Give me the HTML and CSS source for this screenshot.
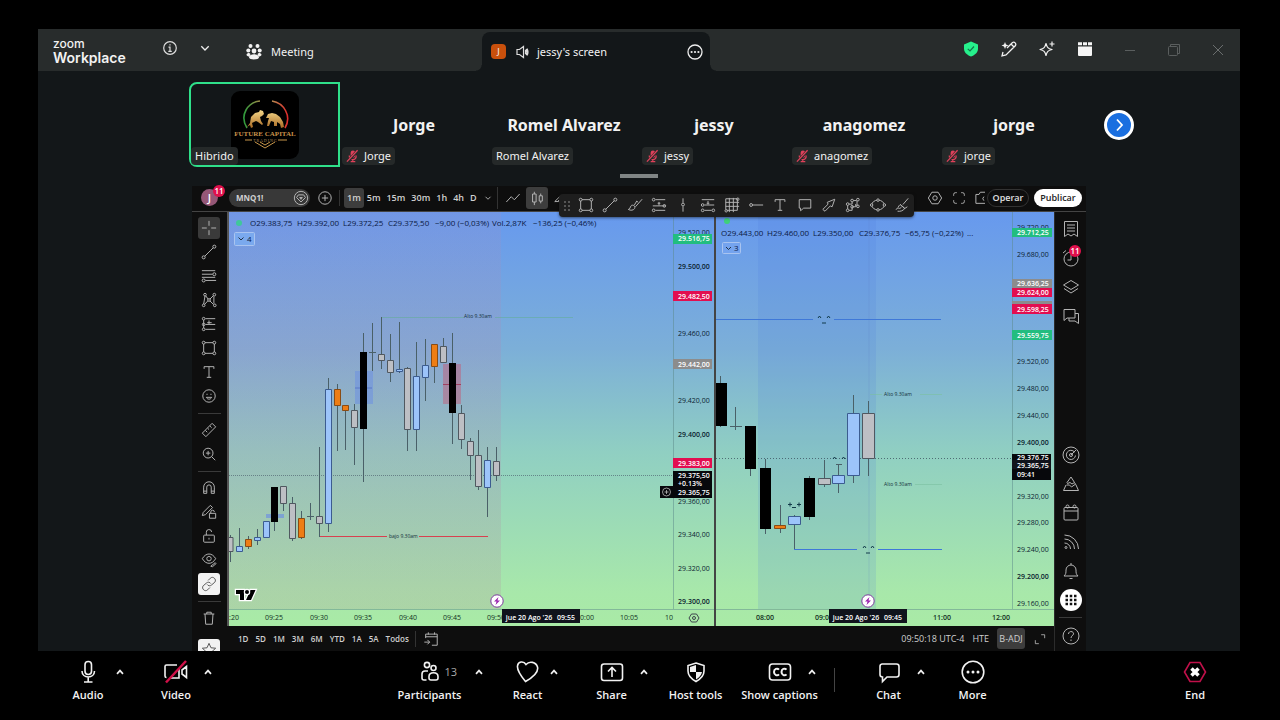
FILE: index.html
```html
<!DOCTYPE html>
<html lang="en">
<head>
<meta charset="utf-8">
<title>Zoom Workplace</title>
<link rel="stylesheet" href="styles.css">
</head>
<body>
<svg class="sprite" aria-hidden="true">
  <symbol id="mic-off" viewBox="0 0 14 14"><rect x="5" y="1" width="5" height="8" rx="2.5" fill="#e0405a"/><path d="M3.500 6.500c0 6 7.500 6 7.500 0M7.300 11v2M5 13h5" fill="none" stroke="#e0405a" stroke-width="1.300"/><path d="M1.500 13.500 12.500 1" stroke="#262a2a" stroke-width="3"/><path d="M1 13 12.500.8" stroke="#e0405a" stroke-width="1.400"/></symbol>
  <symbol id="caret" viewBox="0 0 12 12"><path d="M3 7.800 6 4.600l3 3.200" fill="none" stroke="#eee" stroke-width="1.700"/></symbol>
  <symbol id="i-cross" viewBox="0 0 18 18"><path d="M9 1v5.500M9 11.500V17M1 9h5.500M11.500 9H17"/></symbol>
  <symbol id="i-line" viewBox="0 0 18 18"><circle cx="3" cy="15" r="1.700"/><circle cx="15" cy="3" r="1.700"/><path d="M4.300 13.700 13.700 4.300"/></symbol>
  <symbol id="i-fib" viewBox="0 0 18 18"><path d="M1 3h15M1 7h12M1 10.500h15M5 14h12"/><circle cx="15" cy="7" r="1.700"/><circle cx="3" cy="14" r="1.700"/></symbol>
  <symbol id="i-pattern" viewBox="0 0 18 18"><path d="M3 13.500 4.500 4.500M5.500 4.500 8 8M10 8l4-4M10 10l4 4M7.700 10 4 14M14.500 5v8"/><circle cx="4.500" cy="3" r="1.500"/><circle cx="9" cy="9" r="1.500"/><circle cx="15" cy="3" r="1.500"/><circle cx="3" cy="15" r="1.500"/><circle cx="15.500" cy="15" r="1.500"/></symbol>
  <symbol id="i-forecast" viewBox="0 0 18 18"><path d="M5 3h11M5 9.500h11M5 15h11M3 4.500v9M9 5v4M7 7.500h5"/><circle cx="3" cy="3" r="1.500"/><circle cx="3" cy="9.500" r="1.500"/><circle cx="3" cy="15" r="1.500"/></symbol>
  <symbol id="i-long" viewBox="0 0 18 18"><path d="M5 3h11M5 15h11M2 10h14M9 5.500v4M7.500 7h3"/><circle cx="3" cy="3" r="1.500"/><circle cx="3" cy="15" r="1.500"/><circle cx="15" cy="10" r="1.500"/></symbol>
  <symbol id="i-short" viewBox="0 0 18 18"><path d="M2 3h14M5 9h11M5 15h8M9 4.500v4M7.500 7h3"/><circle cx="3" cy="9" r="1.500"/><circle cx="3" cy="15" r="1.500"/><circle cx="15" cy="15" r="1.500"/></symbol>
  <symbol id="i-rect" viewBox="0 0 18 18"><path d="M4.500 3h9M4.500 15h9M3 4.500v9M15 4.500v9"/><circle cx="3" cy="3" r="1.600"/><circle cx="15" cy="3" r="1.600"/><circle cx="3" cy="15" r="1.600"/><circle cx="15" cy="15" r="1.600"/></symbol>
  <symbol id="i-text" viewBox="0 0 18 18"><path d="M3.500 5.500V3h11v2.500M9 3v12M6.500 15h5"/></symbol>
  <symbol id="i-smile" viewBox="0 0 18 18"><circle cx="9" cy="9" r="7"/><path d="M6.800 6.500v1.300M11.200 6.500v1.300M6 10.500c1 2.700 5 2.700 6 0z"/></symbol>
  <symbol id="i-ruler" viewBox="0 0 18 18"><path d="M1.500 12.500 12.500 1.500l4 4-11 11zM5 9.500l2 2M7.500 7l1.500 1.500M10 4.500l2 2"/></symbol>
  <symbol id="i-zoom" viewBox="0 0 18 18"><circle cx="8" cy="8" r="5.500"/><path d="m12 12 4 4M8 5.500v5M5.500 8h5"/></symbol>
  <symbol id="i-magnet" viewBox="0 0 18 18"><path d="M3 15V8a6 6 0 0 1 12 0v7h-3.500V8a2.500 2.500 0 0 0-5 0v7zM3 12.500h3.500M11.500 12.500H15"/></symbol>
  <symbol id="i-penlock" viewBox="0 0 18 18"><path d="m1.500 13 1-3.500 8-8 2.500 2.500-8 8zM9.500 10.500h7v5.500h-7zM11 10.500V9a2 2 0 0 1 4 0"/></symbol>
  <symbol id="i-lock" viewBox="0 0 18 18"><rect x="3" y="8" width="12" height="8" rx="1"/><path d="M6 8V5a3 3 0 0 1 6-.5M9 11v2"/></symbol>
  <symbol id="i-eye" viewBox="0 0 18 18"><path d="M1.500 7.500c4-7 11-7 15 0-4 7-11 7-15 0z"/><circle cx="9" cy="7.500" r="2.500"/><path d="m11 16 5-4 1 1-4 3.500z"/></symbol>
  <symbol id="i-link" viewBox="0 0 18 18"><path d="m8 5 2.500-2.500c3-3 7.500 1.500 5 4.500L12 10c-1.500 1.500-4 1.300-5-.5M10 13l-2.500 2.500c-3 3-7.500-1.500-5-4.500L6 8c1.500-1.500 4-1.300 5 .5"/></symbol>
  <symbol id="i-trash" viewBox="0 0 18 18"><path d="M3 4.500h12M6.500 4.500V2.500h5v2M4.500 4.500l.8 11.500h7.400l.8-11.500"/></symbol>
  <symbol id="i-star" viewBox="0 0 18 18"><path d="m9 1.500 2.200 5 5.300.5-4 3.600 1.200 5.400L9 13.200 4.300 16l1.200-5.400-4-3.600 5.300-.5z"/></symbol>
  <symbol id="i-brush" viewBox="0 0 18 18"><path d="M1.500 14c2-.5 2-2.500 3-4 1.500-2 5.500 0 4 3-1 2-4.500 2.500-7 1zM8 9.500l3-5M9.500 11 17 2.500M11 4.500l1.500 1.500"/></symbol>
  <symbol id="i-vline" viewBox="0 0 18 18"><path d="M9 1.500v5M9 10.500v6"/><circle cx="9" cy="8.500" r="1.600"/></symbol>
  <symbol id="i-grid" viewBox="0 0 18 18"><path d="M2 2h13v13H3M2 2v12M6 1v16M10.500 1v16M2 6h15M2 10.500h15"/><circle cx="15.500" cy="2.500" r="1.400"/><circle cx="2.500" cy="15.500" r="1.400"/></symbol>
  <symbol id="i-hray" viewBox="0 0 18 18"><circle cx="3.500" cy="9" r="1.600"/><path d="M5 9h12"/></symbol>
  <symbol id="i-bubble" viewBox="0 0 18 18"><path d="M2.500 3h13v9.500H7.500L4 15.500v-3H2.500z"/></symbol>
  <symbol id="i-arrow" viewBox="0 0 18 18"><path d="m2 14 6-6-1-2 8.500-3.500L12.500 11l-2-1-6 6z"/></symbol>
  <symbol id="i-path" viewBox="0 0 18 18"><path d="M3 13.500v-4M4.500 8H8V5.500M4.500 15H8v-4h4V8M9.500 4H13M13.500 10.500V4.500"/><circle cx="3" cy="15" r="1.500"/><circle cx="3" cy="8" r="1.500"/><circle cx="8" cy="4" r="1.500"/><circle cx="8" cy="11" r="1.500"/><circle cx="14.500" cy="3" r="1.500"/><circle cx="14.500" cy="10.500" r="1.500"/></symbol>
  <symbol id="i-ellipse" viewBox="0 0 18 18"><ellipse cx="9" cy="9" rx="7" ry="5.500"/><g fill="#1e1e1e"><circle cx="1.800" cy="9" r="1.400"/><circle cx="16.200" cy="9" r="1.400"/><circle cx="9" cy="3.500" r="1.400"/><circle cx="9" cy="14.500" r="1.400"/></g></symbol>
  <symbol id="i-broom" viewBox="0 0 18 18"><path d="m16 1.500-6 7M2 14c3-.5 2.500-4 5-5.500l5 4c-1 3-5 4-8 3.500M7 8.500 12 13l3-2M5 13c2 0 3-1 3.500-2"/></symbol>
  <symbol id="i-hex" viewBox="0 0 18 18"><path d="m5.500 2.500-4 6.500 4 6.500h7l4-6.500-4-6.500z"/><circle cx="9" cy="9" r="2.500"/></symbol>
  <symbol id="i-full" viewBox="0 0 18 18"><path d="M3 6.500V5a2 2 0 0 1 2-2h1.500M11.500 3H13a2 2 0 0 1 2 2v1.500M15 11.500V13a2 2 0 0 1-2 2h-1.500M6.500 15H5a2 2 0 0 1-2-2v-1.500"/></symbol>
  <symbol id="i-plus" viewBox="0 0 18 18"><circle cx="9" cy="9" r="7"/><path d="M9 5.500v7M5.500 9h7"/></symbol>
  <symbol id="i-zig" viewBox="0 0 18 18"><path d="m1.500 13.500 5.500-6 3.500 3.500 6-6.500"/></symbol>
  <symbol id="i-candle" viewBox="0 0 18 18"><path d="M4 4.500h4v9H4zM6 2v2.500M6 13.500V17M11.500 6.500h3.500v6h-3.500zM13.200 4v2.500M13.200 12.500V15"/></symbol>
  <symbol id="i-down" viewBox="0 0 12 12"><path d="m3 4.500 3 3 3-3"/></symbol>
  <symbol id="i-list" viewBox="0 0 18 18"><path d="M2.500 1.500h13v15L12 14l-3 2-3-2-3.500 2.500zM5 5h8M5 8h8M5 11h8"/></symbol>
  <symbol id="i-alarm" viewBox="0 0 18 18"><circle cx="9" cy="10" r="7"/><path d="M9 5.500V11H5.500M1 4l3-2.500"/></symbol>
  <symbol id="i-layers" viewBox="0 0 18 18"><path d="m9 2.500 7.500 4.500L9 11.500 1.500 7zM2 10.500 9 15l7-4.500"/></symbol>
  <symbol id="i-chat2" viewBox="0 0 18 18"><path d="M2 2.500h11v8.500H5l-3 2.500zM13 6.500h3.500v10L13 14H7v-3"/></symbol>
  <symbol id="i-radar" viewBox="0 0 18 18"><circle cx="9" cy="9" r="8"/><path d="M12.500 6a4.600 4.600 0 1 0 1 3.500M9 9l5-5"/><circle cx="9" cy="9" r="1.500"/></symbol>
  <symbol id="i-idea" viewBox="0 0 18 18"><path d="m9 2 3.500 5.500L10 9 8 7.500l-2.500 1-.5-1zM4.500 10h3l2 2 3.500-2.500M4 10l-2.500 5.500h15L14 10l-1.500-2.500"/></symbol>
  <symbol id="i-cal" viewBox="0 0 18 18"><rect x="2" y="3.500" width="14" height="12.500" rx="1"/><path d="M2 7h14"/><circle cx="5.500" cy="2.500" r="1.500"/><circle cx="12.500" cy="2.500" r="1.500"/></symbol>
  <symbol id="i-rss" viewBox="0 0 18 18"><circle cx="4" cy="14.500" r="1"/><path d="M2.500 10a6 6 0 0 1 6 6M2.500 6a10 10 0 0 1 10 10M2.500 2a14 14 0 0 1 14 14"/></symbol>
  <symbol id="i-bell" viewBox="0 0 18 18"><path d="M2 14h14c-2-2-2-3-2-6a5 5 0 0 0-10 0c0 3 0 4-2 6zM7.500 16.500h3M9 1v2"/></symbol>
  <symbol id="i-help" viewBox="0 0 18 18"><circle cx="9" cy="9" r="8"/><path d="M6.500 7c0-3.500 5.500-3 5 0-.3 1.500-2.500 2-2.500 4M9 12.500V14"/></symbol>
  <symbol id="i-goto" viewBox="0 0 18 18"><path d="M3 8V3.500h13V16h-6M3 6.500h13M6 1.500V4M13 1.500V4M1.500 12.500h6M5 10l2.500 2.500L5 15"/></symbol>
  <symbol id="i-expand" viewBox="0 0 18 18"><path d="M10.500 3.500H15V8M7.500 15H3v-4.500"/></symbol>
  <symbol id="bolt" viewBox="0 0 14 14"><circle cx="7" cy="7" r="6.200" fill="#fff" stroke="#7b3a9c"/><path d="M8.500 3 4 7.500h2.500L5.500 11 10 6.500H7.500z" fill="#9c27b0"/></symbol>
</svg>

<main class="window">
  <header class="titlebar">
    <div class="title-left">
      <div class="brand"><span class="brand-zoom">zoom</span><span class="brand-work">Workplace</span></div>
      <button class="ic info" aria-label="Meeting information"><svg width="16" height="16" viewBox="0 0 16 16" fill="none" stroke="#ddd" stroke-width="1.200"><circle cx="8" cy="8" r="6.300"/><path d="M6.500 7.200H8v4M6.300 11.300h3.500M8 4.300v1.300"/></svg></button>
      <button class="ic drop" aria-label="More views"><svg width="12" height="12" viewBox="0 0 12 12"><path d="m2.300 4.300 3.700 3.700 3.700-3.700" fill="none" stroke="#eee" stroke-width="1.300"/></svg></button>
      <button class="meeting-tab"><svg width="16" height="18" viewBox="0 0 16 18" fill="#f2f2f2"><circle cx="4.500" cy="3" r="2"/><circle cx="11.500" cy="3" r="2"/><circle cx="2.300" cy="7.500" r="2"/><circle cx="13.700" cy="7.500" r="2"/><circle cx="8" cy="8" r="2.400"/><path d="M.5 11.500c1-2 3-2 4-.5l-1 2.500C2 13.500.5 13 .5 11.500zM15.500 11.500c-1-2-3-2-4-.5l1 2.500c1.500 0 3-.5 3-2zM3 14.500c0-4.500 10-4.500 10 0 0 2.500-10 2.500-10 0z"/></svg>Meeting</button>
    </div>
    <div class="screen-tab">
      <span class="initial">J</span>
      <svg width="14" height="14" viewBox="0 0 14 14" fill="none" stroke="#ddd" stroke-width="1.200"><path d="M1 4.500h2.500L7.500 1.500v11L3.500 9.500H1zM9.500 5v4M11 3.500q2 3.500 0 7M10 4q2 3 0 6"/></svg>
      <span class="tab-name">jessy's screen</span>
      <button class="ic" aria-label="Tab options"><svg width="18" height="18" viewBox="0 0 18 18"><circle cx="9" cy="9" r="7" fill="none" stroke="#eee" stroke-width="1.300"/><g fill="#eee"><circle cx="5.600" cy="9" r="1.100"/><circle cx="9" cy="9" r="1.100"/><circle cx="12.400" cy="9" r="1.100"/></g></svg></button>
    </div>
    <div class="title-right">
      <div class="tools">
        <button class="ic" aria-label="Security"><svg width="16" height="16" viewBox="0 0 16 16"><path d="M8 .5 15 3.500v4c0 4-3 6.500-7 8-4-1.500-7-4-7-8v-4z" fill="#26f08c"/><path d="m4.800 7.800 2.200 2.200 4-4.500" fill="none" stroke="#14754a" stroke-width="1.200"/></svg></button>
        <button class="ic" aria-label="AI pen"><svg width="16" height="16" viewBox="0 0 16 16" fill="none" stroke="#f2f2f2" stroke-width="1.300"><path d="m6 7 5.500-5.500c2-1 4 1 3 3L5 14l-4 .8L2 11M10 3l3 3"/><path d="m4 1 1 2.500 2.500 1L5 5.500 4 8 3 5.500.5 4.500 3 3.500z" fill="#f2f2f2" stroke="none"/></svg></button>
        <button class="ic" aria-label="AI Companion"><svg width="16" height="16" viewBox="0 0 16 16" fill="none" stroke="#f2f2f2" stroke-width="1.200" stroke-linejoin="round"><path d="M7 2.500c1 4 2 5 6 6-4 1-5 2-6 6-1-4-2-5-6-6 4-1 5-2 6-6zM13 .5v5M10.500 3h5"/></svg></button>
        <button class="ic" aria-label="Layout"><svg width="16" height="16" viewBox="0 0 16 16" fill="#f5f5f5"><path d="M1 1.300h4v3H1zM6 1.300h4v3H6zM11 1.300h4v3h-4zM1 5.500h14V14a1 1 0 0 1-1 1H2a1 1 0 0 1-1-1z"/></svg></button>
      </div>
      <div class="controls">
        <button class="ic" aria-label="Minimize"><svg width="12" height="12" viewBox="0 0 12 12"><path d="M1 6.500h10" stroke="#5a5e5e"/></svg></button>
        <button class="ic" aria-label="Restore"><svg width="12" height="12" viewBox="0 0 12 12" fill="none" stroke="#5a5e5e"><rect x=".5" y="2.500" width="9" height="9" rx="1"/><path d="M2.500 2.500v-2h9v9h-2"/></svg></button>
        <button class="ic" aria-label="Close"><svg width="12" height="12" viewBox="0 0 12 12"><path d="m1 1 10 10M11 1 1 11" stroke="#6a6e6e"/></svg></button>
      </div>
    </div>
  </header>

  <section class="strip">
    <ul class="tiles">
      <li class="tile active">
        <svg class="avatar-logo" viewBox="0 0 68 68">
          <defs><linearGradient id="ring" x2="1"><stop offset="0" stop-color="#2f9a3c"/><stop offset=".4" stop-color="#a98a4a"/><stop offset=".65" stop-color="#b98a50"/><stop offset="1" stop-color="#e02c2c"/></linearGradient><linearGradient id="gold" y2="1" x2="0"><stop offset="0" stop-color="#f6d98a"/><stop offset="1" stop-color="#a86a24"/></linearGradient></defs>
          <rect width="68" height="68" rx="9" fill="#000"/>
          <path d="M16 37C8 24 17 11 29 10M41 10c12 2 20 15 13 27" fill="none" stroke="url(#ring)" stroke-width="1.600"/>
          <path d="M16 36l3-4 1-6 4-4 4-1 1-2 3 1 1 3-2 2-2 1 1 4 2 3-1 1-4-3-2-1-4 2 1 4-2 1-1-3zM37 23l4-1 4 1 4 3 3 5 1 5-3 1-1-4-3-2 0 4-3 0 0-4-3-1-2 5-2 0 1-5 1-3-3 0z" fill="url(#gold)"/>
          <text x="34" y="45" text-anchor="middle" class="logo-name">FUTURE CAPITAL</text>
          <text x="34" y="51" text-anchor="middle" class="logo-sub">T R A D I N G</text>
          <path d="M14 49h7M47 49h9M24 51l10 6 10-6M29 51l5 3 5-3" fill="none" stroke="#c8964a" stroke-width="1"/>
        </svg>
        <span class="tag">Hibrido</span>
      </li>
      <li class="tile"><h2>Jorge</h2><span class="tag muted"><svg><use href="#mic-off"/></svg>Jorge</span></li>
      <li class="tile"><h2>Romel Alvarez</h2><span class="tag">Romel Alvarez</span></li>
      <li class="tile"><h2>jessy</h2><span class="tag muted"><svg><use href="#mic-off"/></svg>jessy</span></li>
      <li class="tile"><h2>anagomez</h2><span class="tag muted"><svg><use href="#mic-off"/></svg>anagomez</span></li>
      <li class="tile"><h2>jorge</h2><span class="tag muted"><svg><use href="#mic-off"/></svg>jorge</span></li>
    </ul>
    <button class="next" aria-label="Next participants"><svg width="14" height="14" viewBox="0 0 14 14"><path d="m5 1.500 5 5.500-5 5.500" fill="none" stroke="#fff" stroke-width="1.800"/></svg></button>
  </section>
  <div class="handle"></div>

  <section class="tv">
    <header class="tv-head">
      <div class="user">J<span class="badge">11</span></div>
      <button class="symbol">MNQ1!<svg class="line" viewBox="0 0 18 18"><circle cx="9" cy="9" r="7.500"/><path d="M6 5.500h6l2 3L9 13.500 4 8.500z"/><path d="M7.500 8.500h3L9 10.500z"/></svg></button>
      <button class="ic plus" aria-label="Compare"><svg class="line"><use href="#i-plus"/></svg></button>
      <nav class="frames">
        <button class="on">1m</button><button>5m</button><button>15m</button><button>30m</button><button>1h</button><button>4h</button><button>D</button>
        <button aria-label="Intervals"><svg class="line small"><use href="#i-down"/></svg></button>
      </nav>
      <div class="styles">
        <button class="ic" aria-label="Line"><svg class="line"><use href="#i-zig"/></svg></button>
        <button class="ic on" aria-label="Candles"><svg class="line"><use href="#i-candle"/></svg></button>
        <button class="ic" aria-label="Indicators"><svg class="line" viewBox="0 0 18 18"><path d="m2 13 7-7v7zM5 13l4-4" /></svg></button>
      </div>
      <div class="actions">
        <button class="ic" aria-label="Settings"><svg class="line"><use href="#i-hex"/></svg></button>
        <button class="ic" aria-label="Full screen"><svg class="line"><use href="#i-full"/></svg></button>
        <button class="ic cam" aria-label="Snapshot"><svg class="line" viewBox="0 0 18 18"><path d="M12 2.500H6L4.500 5H1v10h11M10 7.500a3 3 0 0 0 0 4.500"/></svg></button>
        <button class="trade">Operar</button>
        <button class="publish">Publicar</button>
      </div>
    </header>

    <aside class="side">
      <button class="on" aria-label="Cross"><svg class="line"><use href="#i-cross"/></svg></button>
      <button aria-label="Trend line"><svg class="line"><use href="#i-line"/></svg></button>
      <button aria-label="Fibonacci"><svg class="line"><use href="#i-fib"/></svg></button>
      <button aria-label="Patterns"><svg class="line"><use href="#i-pattern"/></svg></button>
      <button aria-label="Forecast"><svg class="line"><use href="#i-forecast"/></svg></button>
      <button aria-label="Shapes"><svg class="line"><use href="#i-rect"/></svg></button>
      <button aria-label="Text"><svg class="line"><use href="#i-text"/></svg></button>
      <button aria-label="Emoji"><svg class="line"><use href="#i-smile"/></svg></button>
      <hr>
      <button aria-label="Measure"><svg class="line"><use href="#i-ruler"/></svg></button>
      <button aria-label="Zoom in"><svg class="line"><use href="#i-zoom"/></svg></button>
      <hr>
      <button aria-label="Magnet"><svg class="line"><use href="#i-magnet"/></svg></button>
      <button aria-label="Stay in drawing mode"><svg class="line"><use href="#i-penlock"/></svg></button>
      <button aria-label="Lock"><svg class="line"><use href="#i-lock"/></svg></button>
      <button aria-label="Hide"><svg class="line"><use href="#i-eye"/></svg></button>
      <button class="lit" aria-label="Sync drawings"><svg class="line"><use href="#i-link"/></svg></button>
      <hr>
      <button aria-label="Remove"><svg class="line"><use href="#i-trash"/></svg></button>
      <hr class="blank">
      <button class="lit" aria-label="Favorites"><svg class="line"><use href="#i-star"/></svg></button>
    </aside>

    <div class="charts">
      <svg class="pane wide" viewBox="229 212 485 414">
        <defs>
          <linearGradient id="sky" x2="0" y2="1"><stop offset="0" stop-color="#6799ee"/><stop offset=".33" stop-color="#7cafd8"/><stop offset=".58" stop-color="#90cfc2"/><stop offset=".92" stop-color="#a8e8aa"/><stop offset="1" stop-color="#a9eaa6"/></linearGradient>
          <linearGradient id="haze" x2="0" y2="1"><stop offset="0" stop-color="#b48cb4" stop-opacity=".14"/><stop offset=".35" stop-color="#b482b4" stop-opacity=".22"/><stop offset="1" stop-color="#b48ca0" stop-opacity=".22"/></linearGradient>
        </defs>
        <rect x="229" y="212" width="485" height="414" fill="url(#sky)"/>
        <rect x="229" y="212" width="272" height="397" fill="url(#haze)"/>
        <path d="M673.500 212v397M229 609.500h485" stroke="#5c8a8a" stroke-opacity=".5"/>
        <path d="M229 475.500h444" stroke="#456" stroke-opacity=".6" stroke-dasharray="1 1"/>
        <circle cx="239" cy="223" r="3" fill="#3fc79a"/>
        <g class="ohlc"><text x="250" y="226">O29.383,75</text><text x="297" y="226">H29.392,00</text><text x="343" y="226">L29.372,25</text><text x="388" y="226">C29.375,50</text><text x="435" y="226">−9,00 (−0,03%)</text><text x="492" y="226">Vol.2,87K</text><text x="533" y="226">−136,25 (−0,46%)</text></g>
        <rect x="234.500" y="232.500" width="20" height="13" rx="1" fill="#7aa9ee" stroke="#a9c4f0"/><path d="m238.500 237.500 2.500 2.500 2.500-2.500" fill="none" stroke="#234"/><text x="247" y="242" class="ohlc">4</text>

        <rect x="355" y="371" width="18" height="33" fill="#6f92e0" fill-opacity=".6"/><rect x="443" y="364" width="18" height="40" fill="#c0607c" fill-opacity=".5"/>
        <path d="M355 388h17" stroke="#5a78c8"/><path d="M266 516h18" stroke="#6f92e0" stroke-width="4" stroke-opacity=".7"/><path d="M443 384.500h18" stroke="#a04060"/>
        <path d="M381 317.500h83M495 317.500h78" stroke="#5fae90" stroke-opacity=".5"/>
        <path d="M319 536.500h68M419 536.500h69" stroke="#d8404f"/>
        <text x="464" y="318" class="note">Alto 9.30am</text><text x="389" y="538" class="note">bajo 9.30am</text>

        <path class="wick" d="M230.500 535v27M239.500 528v24M248.500 536v13M257.500 529v16M274.500 487v44M283.500 486v25M292.500 497v44M301.500 511v28M310.500 503v17M319.500 447v90M328.500 378v154M337.500 384v67M345.500 405v45M354.500 404v61M363.500 333v149M372.500 323v48M381.500 317v52M390.500 334v48M399.500 322v51M407.500 367v84M416.500 342v109M425.500 339v62M434.500 344v39M443.500 338v25M452.500 333v111M461.500 405v44M470.500 438v42M478.500 430v60M487.500 447v70M496.500 447v34M307 516.500h7M369 352.500h7"/>
        <path class="gray" d="M228 537.500h5v14h-5zM280.500 486.500h6v17h-6zM289.500 503.500h6v35h-6zM316.500 516.500h6v7h-6zM351.500 410.500h6v17h-6zM378.500 354.500h6v6h-6zM387.500 360.500h6v12h-6zM404.500 368.500h6v61h-6zM440.500 346.500h6v16h-6zM458.500 413.500h6v26h-6zM467.500 441.500h6v14h-6zM475.500 455.500h6v31h-6zM493.500 461.500h6v14h-6z"/>
        <path class="blue" d="M236.500 546.500h6v5h-6zM254.500 537.500h6v3h-6zM263.500 521.500h6v16h-6zM325.500 389.500h6v134h-6zM396.500 369.500h6v2h-6zM413.500 376.500h6v53h-6zM422.500 365.500h6v12h-6zM484.500 460.500h6v27h-6z"/>
        <path class="orange" d="M245.500 539.500h6v7h-6zM298.500 518.500h6v19h-6zM334.500 389.500h6v16h-6zM342.500 405.500h6v5h-6zM431.500 344.500h6v22h-6z"/>
        <path d="M271 487h7v35h-7zM360 352h7v77h-7zM449 363h7v50h-7z"/>

        <g stroke="#fff" stroke-width="2.500" paint-order="stroke"><path d="M236 590h8v10h-4v-6h-4zM250.500 590h5l-4.500 10h-5z"/><circle cx="247" cy="592" r="2"/></g>
        <use href="#bolt" x="490" y="594" width="14" height="14"/>

        <g class="price"><text x="678" y="235">29.520,00</text><text x="678" y="336">29.460,00</text><text x="678" y="403">29.420,00</text><text x="678" y="504">29.360,00</text><text x="678" y="537">29.340,00</text><text x="678" y="571">29.320,00</text></g>
        <g class="price strong"><text x="678" y="269">29.500,00</text><text x="678" y="437">29.400,00</text><text x="678" y="604">29.300,00</text></g>
        <path d="M673 234h39v10h-39z" fill="#22bd7f"/><path d="M673 291h39v10h-39zM673 458h39v10h-39z" fill="#e20e50"/><path d="M673 359h39v10h-39z" fill="#8c8c8c"/><path d="M673 471h39v27h-39zM660 486h14v12h-14z" fill="#07080c"/>
        <g class="price white"><text x="678" y="241">29.516,75</text><text x="678" y="299">29.482,50</text><text x="678" y="367">29.442,00</text><text x="678" y="466">29.383,00</text><text x="678" y="478">29.375,50</text><text x="678" y="486">+0.13%</text><text x="678" y="495">29.365,75</text></g>
        <g fill="none" stroke="#bbb" stroke-width=".8"><circle cx="666.500" cy="492" r="4"/><path d="M664.500 492h4M666.500 490v4"/></g>

        <g class="time"><text x="234" y="620">:20</text><text x="274" y="620">09:25</text><text x="319" y="620">09:30</text><text x="363" y="620">09:35</text><text x="408" y="620">09:40</text><text x="452" y="620">09:45</text><text x="496" y="620">09:50</text><text x="585" y="620">10:00</text><text x="629" y="620">10:05</text><text x="669" y="620">10</text></g>
        <rect x="502" y="609" width="78" height="14" fill="#10131c"/><g class="time white"><text x="529" y="620">jue 20 Ago '26</text><text x="566" y="620">09:55</text></g>
        <g fill="none" stroke="#334" stroke-width=".9"><path d="m691.500 614-2.500 4 2.500 4h5l2.500-4-2.500-4z"/><circle cx="694" cy="618" r="1.500"/></g>
      </svg>

      <svg class="pane narrow" viewBox="716 212 338 414">
        <rect x="716" y="212" width="338" height="414" fill="url(#sky)"/>
        <rect x="758" y="212" width="118" height="397" fill="#4a78e0" fill-opacity=".15"/>
        <path d="M1012.500 212v397M716 609.500h338" stroke="#5c8a8a" stroke-opacity=".5"/>
        <path d="M869 212v397" stroke="#5878c0" stroke-opacity=".2"/>
        <path d="M716 458.500h296" stroke="#345" stroke-opacity=".7" stroke-dasharray="1 2"/>
        <circle cx="727" cy="221" r="3" fill="#3fd07a"/>
        <g class="ohlc"><text x="721" y="236">O29.443,00</text><text x="767" y="236">H29.460,00</text><text x="813" y="236">L29.350,00</text><text x="859" y="236">C29.376,75</text><text x="905" y="236">−65,75 (−0,22%)</text><text x="967" y="236">...</text></g>
        <rect x="722.500" y="242.500" width="18" height="11" rx="1" fill="#74a3ee" stroke="#a9c4f0"/><path d="m726 247 2.500 2.500 2.500-2.500" fill="none" stroke="#234"/><text x="734" y="251" class="ohlc">3</text>

        <path d="M716 319.500h97M834 319.500h107M794 549.500h63M878 549.500h64" stroke="#3f78d8"/>
        <path d="M870 394.500h12M920 394.500h22M915 484.500h27" stroke="#7cc0a0" stroke-opacity=".6"/>
        <text x="884" y="396" class="note">Alto 9.30am</text><text x="884" y="486" class="note">Alto 9.30am</text>
        <path d="m818 318 1.500-2 1.500 2M827 318l1.500-2 1.500 2M822 323h4M833 459l1.500-2 1.500 2M842 459l1.500-2 1.500 2M863 548l1.500-2 1.500 2M871 548l1.500-2 1.500 2M866 553h4M788 504.500h4M790 502.500v4M797 504.500h4M799 502.500v4M792 507.500h4" fill="none" stroke="#123a4a"/>

        <path class="wick" d="M720.500 376v51M735.500 407v23M750.500 426v50M765.500 459v75M780.500 505v28M794.500 515v34M809.500 476v44M824.500 460v27M838.500 464v29M853.500 395v88M868.500 401v75M730 426.500h12M836 464.500h6"/>
        <path class="gray" d="M818.500 478.500h12v6h-12zM862.500 413.500h12v45h-12z"/>
        <path class="blue" d="M788.500 516.500h12v8h-12zM832.500 475.500h12v8h-12zM847.500 413.500h12v62h-12z"/>
        <path class="orange" d="M774.500 525.500h11v3h-11z"/>
        <path d="M716 383h11v43h-11zM745 426h11v43h-11zM760 468h11v61h-11zM804 478h11v39h-11z"/>
        <use href="#bolt" x="861" y="594" width="14" height="14"/>

        <g class="price"><text x="1017" y="230">29.720,00</text><text x="1017" y="257">29.680,00</text><text x="1017" y="364">29.520,00</text><text x="1017" y="391">29.480,00</text><text x="1017" y="418">29.440,00</text><text x="1017" y="499">29.320,00</text><text x="1017" y="525">29.280,00</text><text x="1017" y="552">29.240,00</text><text x="1017" y="606">29.160,00</text></g>
        <g class="price strong"><text x="1017" y="445">29.400,00</text><text x="1017" y="579">29.200,00</text></g>
        <path d="M1012 228h40v9h-40zM1012 330h40v10h-40z" fill="#22bd7f"/><path d="M1012 279h40v9h-40zM1012 301h40v5h-40z" fill="#8c8c8c"/><path d="M1012 288h40v9h-40zM1012 304h40v10h-40z" fill="#e20e50"/><path d="M1012 454h39v26h-39z" fill="#07080c"/>
        <g class="price white"><text x="1017" y="235">29.712,25</text><text x="1017" y="286">29.636,25</text><text x="1017" y="295">29.624,00</text><text x="1017" y="312">29.598,25</text><text x="1017" y="338">29.559,75</text><text x="1017" y="460">29.376,75</text></g>
        <path d="M1012 460h39v9h-39z" fill="#10131c"/>
        <g class="price white"><text x="1017" y="468">29.365,75</text><text x="1017" y="477">09:41</text></g>

        <g class="time strong"><text x="765" y="620">08:00</text><text x="824" y="620">09:00</text><text x="942" y="620">11:00</text><text x="1001" y="620">12:00</text></g>
        <rect x="829" y="609" width="78" height="14" fill="#10131c"/><g class="time white"><text x="856" y="620">jue 20 Ago '26</text><text x="893" y="620">09:45</text></g>
      </svg>
    </div>

    <aside class="side-right">
      <button aria-label="Watchlist"><svg class="line"><use href="#i-list"/></svg></button>
      <button aria-label="Alerts"><svg class="line"><use href="#i-alarm"/></svg><span class="badge">11</span></button>
      <button aria-label="Object tree"><svg class="line"><use href="#i-layers"/></svg></button>
      <button aria-label="Chats"><svg class="line"><use href="#i-chat2"/></svg></button>
      <button class="first-low" aria-label="Screener"><svg class="line"><use href="#i-radar"/></svg></button>
      <button aria-label="Ideas"><svg class="line"><use href="#i-idea"/></svg></button>
      <button aria-label="Calendar"><svg class="line"><use href="#i-cal"/></svg></button>
      <button aria-label="News"><svg class="line"><use href="#i-rss"/></svg></button>
      <button aria-label="Notifications"><svg class="line"><use href="#i-bell"/></svg></button>
      <button aria-label="Products"><svg class="apps" width="22" height="22" viewBox="0 0 22 22"><circle cx="11" cy="11" r="11" fill="#fff"/><path d="M5.500 7h11M5.500 11h11M5.500 15h11" stroke="#111" stroke-width="2.500" stroke-dasharray="2.500 1.750"/></svg></button>
      <hr>
      <button aria-label="Help"><svg class="line"><use href="#i-help"/></svg></button>
    </aside>

    <footer class="tv-foot">
      <nav class="ranges"><button>1D</button><button>5D</button><button>1M</button><button>3M</button><button>6M</button><button>YTD</button><button>1A</button><button>5A</button><button>Todos</button></nav>
      <button class="ic goto" aria-label="Go to date"><svg class="line"><use href="#i-goto"/></svg></button>
      <div class="session"><button>09:50:18 UTC-4</button><button>HTE</button><button class="on">B-ADJ</button><button class="ic" aria-label="Maximize"><svg class="line"><use href="#i-expand"/></svg></button></div>
    </footer>

    <div class="floating">
      <span class="grip"></span>
      <button aria-label="Rectangle"><svg class="line"><use href="#i-rect"/></svg></button>
      <button aria-label="Trend line"><svg class="line"><use href="#i-line"/></svg></button>
      <button aria-label="Brush"><svg class="line"><use href="#i-brush"/></svg></button>
      <button aria-label="Long position"><svg class="line"><use href="#i-long"/></svg></button>
      <button aria-label="Vertical line"><svg class="line"><use href="#i-vline"/></svg></button>
      <button aria-label="Short position"><svg class="line"><use href="#i-short"/></svg></button>
      <button aria-label="Gann box"><svg class="line"><use href="#i-grid"/></svg></button>
      <button aria-label="Horizontal ray"><svg class="line"><use href="#i-hray"/></svg></button>
      <button aria-label="Text"><svg class="line"><use href="#i-text"/></svg></button>
      <button aria-label="Comment"><svg class="line"><use href="#i-bubble"/></svg></button>
      <button aria-label="Arrow"><svg class="line"><use href="#i-arrow"/></svg></button>
      <button aria-label="Path"><svg class="line"><use href="#i-path"/></svg></button>
      <button aria-label="Ellipse"><svg class="line"><use href="#i-ellipse"/></svg></button>
      <button aria-label="Highlighter"><svg class="line"><use href="#i-broom"/></svg></button>
    </div>
  </section>
</main>

<footer class="toolbar">
  <div class="group left">
    <div class="tool"><button class="main"><svg viewBox="0 0 24 24"><rect x="9" y="1.500" width="6.500" height="13" rx="3.200"/><path d="M6 11c0 8 12.500 8 12.500 0M12.200 17v4.500M8 22h8.500"/></svg>Audio</button><button class="caret" aria-label="Audio options"><svg><use href="#caret"/></svg></button></div>
    <div class="tool"><button class="main"><svg viewBox="0 0 24 24"><path d="M13 5H2.500A1.500 1.500 0 0 0 1 6.500V16a1.500 1.500 0 0 0 1.500 1.500M7 18h8V8M18 10l4.500-3.500v11L18 14z"/><path d="M2 22.500 22 1" stroke="#d01048" stroke-width="2.500"/></svg>Video</button><button class="caret" aria-label="Video options"><svg><use href="#caret"/></svg></button></div>
  </div>
  <div class="group center">
    <div class="tool people"><button class="main"><svg viewBox="0 0 24 24"><circle cx="9" cy="5" r="2.600"/><circle cx="15.500" cy="8" r="2.500"/><path d="M10 11H7a3 3 0 0 0-3 3v4a2 2 0 0 0 2 2h2.500M11 16.500c0-5 9-5 9 0V18a2 2 0 0 1-2 2h-5a2 2 0 0 1-2-2z"/></svg>Participants</button><span class="count">13</span><button class="caret" aria-label="Participant options"><svg><use href="#caret"/></svg></button></div>
    <div class="tool react"><button class="main"><svg viewBox="0 0 24 24"><path d="M9.500 21.500C5 16 1 10 1.500 6c.5-4.500 6-5.500 8.500-1.500C13.500.5 20 2 21.500 7c1.500 6-5 10.500-12 14.500z"/></svg>React</button><button class="caret" aria-label="Reaction options"><svg><use href="#caret"/></svg></button></div>
    <div class="tool"><button class="main"><svg viewBox="0 0 24 24"><rect x="1.500" y="4" width="21" height="16.500" rx="2.500"/><path d="M12 17V8.500M8 11.500l4-4 4 4"/></svg>Share</button><button class="caret" aria-label="Share options"><svg><use href="#caret"/></svg></button></div>
    <div class="tool"><button class="main"><svg viewBox="0 0 24 24"><path d="M12 3l8 2.500V11c0 5-3.500 8-8 10.500C7.500 19 4 16 4 11V5.500z"/><path d="M12 5v7H6V7zM12 12h6c-.5 3-3 5.500-6 7.500z" fill="#f2f2f2" stroke="none"/></svg>Host tools</button></div>
    <div class="tool"><button class="main"><svg viewBox="0 0 24 24"><rect x="1.500" y="4" width="21" height="16" rx="3"/><path d="M11 9.700c-1.700-1.900-5-.9-5 2.300s3.300 4.200 5 2.300M18.500 9.700c-1.700-1.900-5-.9-5 2.300s3.300 4.200 5 2.300" stroke-width="2"/></svg>Show captions</button><button class="caret" aria-label="Caption options"><svg><use href="#caret"/></svg></button></div>
    <span class="divider"></span>
    <div class="tool"><button class="main"><svg viewBox="0 0 24 24"><path d="M5 4h14.500A2.500 2.500 0 0 1 22 6.500v8a2.500 2.500 0 0 1-2.500 2.500H10l-4.500 4.500V17A2.500 2.500 0 0 1 3 14.500V6.500A2.500 2.500 0 0 1 5 4z"/></svg>Chat</button><button class="caret" aria-label="Chat options"><svg><use href="#caret"/></svg></button></div>
    <div class="tool"><button class="main"><svg viewBox="0 0 24 24"><circle cx="12" cy="12" r="10.800"/><g fill="#f2f2f2" stroke="none"><circle cx="7" cy="12" r="1.500"/><circle cx="12" cy="12" r="1.500"/><circle cx="17" cy="12" r="1.500"/></g></svg>More</button></div>
  </div>
  <div class="tool"><button class="main"><svg viewBox="0 0 24 24"><path d="M7 2.500h10L22.500 12 17 21.500H7L1.500 12z" stroke="#c0104a"/><path d="m8.500 8.500 7 7M15.500 8.500l-7 7" stroke="#fff" stroke-width="3.500"/></svg>End</button></div>
</footer>
</body>
</html>
```
FILE: styles.css
```css
* { box-sizing: border-box; }
body { margin: 0; padding-top: 29px; min-height: 100vh; background: #000; color: #f2f2f2; font-family: "Noto Sans", "Open Sans", sans-serif; font-size: 11px; line-height: 16px; }
button { margin: 0; padding: 0; border: 0; background: none; color: inherit; font: inherit; display: flex; align-items: center; justify-content: center; }
hr { margin: 0; border: 0; }
svg { display: block; flex: none; }
.sprite { position: absolute; width: 0; height: 0; }
.window { margin: 0 40px 0 38px; background: #131719; }

.titlebar { display: grid; grid-template-columns: 444fr 228fr 530fr; height: 42px; background: #282c2c; }
.title-left { display: flex; align-items: center; padding: 3px 0 0 15px; }
.brand { display: flex; flex-direction: column; width: 109px; font-family: "Inter", sans-serif; }
.brand-zoom { font-size: 12px; line-height: 12px; font-weight: 500; }
.brand-work { font-size: 14px; line-height: 16px; font-weight: 600; }
.info, .drop { align-self: flex-start; height: 32px; }
.drop { margin-left: 21px; }
.meeting-tab { margin-left: 35px; gap: 9px; }
.screen-tab { position: relative; display: flex; align-items: center; margin-top: 3px; padding: 0 6px 0 9px; background: #131719; border-radius: 8px 8px 0 0; }
.screen-tab::before, .screen-tab::after { content: ""; position: absolute; bottom: 0; width: 6px; height: 6px; }
.screen-tab::before { right: 100%; background: radial-gradient(circle at 0 0, #282c2c 5px, #131719 6px); }
.screen-tab::after { left: 100%; background: radial-gradient(circle at 100% 0, #282c2c 5px, #131719 6px); }
.initial { width: 15px; height: 15px; border-radius: 4px; background: #c9500c; font-size: 9px; line-height: 15px; text-align: center; margin-right: 10px; }
.tab-name { margin-left: 7px; flex: 1; }
.title-right { display: flex; justify-content: flex-end; }
.tools, .controls { display: flex; }
.tools { margin-right: 4px; padding-bottom: 2px; }
.tools .ic { width: 38px; }
.controls .ic { width: 44px; }

.strip { display: grid; grid-template-columns: 1fr auto 1fr; align-items: center; padding-top: 11px; }
.tiles { grid-column: 2; display: grid; grid-template-columns: repeat(6, 150px); margin: 0; padding: 0; list-style: none; }
.tile { position: relative; height: 85px; display: flex; align-items: center; justify-content: center; }
.tile.active { width: 151px; border: 2px solid #2fe08a; border-radius: 8px 0 0 8px; }
.tile h2 { margin: 0; font: bold 16px/24px "Noto Sans", sans-serif; }
.tag { position: absolute; left: 3px; bottom: 2px; height: 18px; padding: 0 4px; border-radius: 4px; background: rgba(40, 43, 43, .9); line-height: 18px; display: flex; align-items: center; gap: 5px; }
.active .tag { left: 0; bottom: 0; }
.tag svg { width: 13px; height: 14px; }
.avatar-logo { width: 68px; height: 68px; }
.logo-name { font: bold 7px "Liberation Serif", serif; fill: #c8924a; }
.logo-sub { font: 4px "Liberation Serif", serif; fill: #b08a5a; }
.next { width: 30px; height: 30px; margin-left: 15px; border: 3px solid #fff; border-radius: 50%; background: #1a6fe0; }
.handle { width: 38px; height: 4px; margin: 7px auto 8px; background: #808585; }

.tv { position: relative; max-width: 894px; margin: 0 auto; display: grid; grid-template-columns: 35px 1fr 32px; grid-template-rows: 26px auto 25px; background: #0e0e0e; font: 9px/12px "Open Sans", sans-serif; color: #d0d0d0; }
.line { width: 16px; height: 16px; fill: none; stroke: #b4b4b4; stroke-width: 1.1; }
.line.small { width: 10px; height: 10px; }
.badge { position: absolute; min-width: 12px; height: 12px; border-radius: 6px; background: #e0104c; color: #fff; font-size: 8px; line-height: 12px; font-weight: 600; text-align: center; }
.tv-head { grid-column: 1 / -1; display: flex; align-items: center; padding: 0 4px 2px 9px; border-bottom: 1px solid #444; }
.user { position: relative; width: 17px; height: 17px; border-radius: 50%; background: #955777; color: #fff; font-size: 11px; line-height: 17px; font-weight: 600; text-align: center; }
.user .badge { left: 12px; top: -4px; }
.symbol { width: 81px; height: 18px; margin-left: 11px; padding: 0 1px 0 7px; justify-content: space-between; border-radius: 9px; background: #383838; font-size: 8px; font-weight: 700; }
.plus { margin-left: 7px; padding-right: 6px; border-right: 1px solid #333; }
.frames { display: flex; margin-left: 4px; font-weight: 600; font-size: 9px; }
.frames button { height: 20px; padding: 0 3px; border-radius: 3px; }
.frames .on, .styles .on, .session .on { background: #3d3d3d; }
.styles { display: flex; margin-left: 1px; padding-left: 4px; gap: 2px; border-left: 1px solid #333; }
.styles button { width: 22px; height: 22px; border-radius: 3px; }
.actions { display: flex; align-items: center; margin-left: auto; gap: 8px; }
.cam { width: 10px; overflow: hidden; justify-content: flex-start; }
.trade, .publish { height: 18px; border-radius: 9px; font-weight: 600; font-size: 9px; }
.trade { width: 42px; margin-left: -6px; border: 1px solid #333; background: #0e0e0e; color: #e0e0e0; }
.publish { width: 48px; margin-left: -3px; background: #fff; color: #222; }

.side { grid-column: 1; grid-row: 2 / 4; height: 0; min-height: 100%; overflow: hidden; padding-top: 4px; display: flex; flex-direction: column; }
.side button { flex: none; width: 22px; height: 22px; margin: 1px 6px; border-radius: 3px; }
.side button.on { background: #3a3a3a; }
.side .lit { background: #f2f2f2; }
.side .lit .line { stroke: #555; }
.side hr { flex: none; width: 23px; height: 10px; margin-left: 6px; background: linear-gradient(#3a3a3a, #3a3a3a) center / 100% 1px no-repeat; }
.side hr.blank { background: none; height: 8px; }
.charts { grid-column: 2; display: flex; gap: 2px; background: #444; border-left: 2px solid #555; }
.pane { display: block; min-width: 0; height: auto; }
.wide { flex: 485 1 0; }
.narrow { flex: 338 1 0; }
.side-right { grid-column: 3; grid-row: 2 / 4; display: flex; flex-direction: column; border-left: 1px solid #2c2c2c; padding: 2px 0 1px; }
.side-right button { position: relative; height: 29px; }
.side-right .line { width: 18px; height: 18px; stroke-width: 1; }
.side-right .badge { left: 14px; top: 2px; }
.side-right .first-low { margin-top: auto; }
.side-right hr { height: 7px; margin: 0 4px; background: linear-gradient(#3a3a3a, #3a3a3a) center / 100% 1px no-repeat; }
.tv-foot { grid-column: 2; display: flex; align-items: center; padding: 0 7px 0 11px; font-size: 9px; font-weight: 600; }
.ranges { display: flex; gap: 7px; font-size: 8px; }
.goto { margin-left: 6px; padding-left: 7px; border-left: 1px solid #333; }
.session { display: flex; align-items: center; gap: 8px; margin-left: auto; font-weight: 400; }
.session .on { height: 21px; width: 28px; border-radius: 3px; }
.session .line { width: 14px; height: 14px; }
.floating { position: absolute; left: 367px; top: 8px; width: 355px; height: 23px; display: flex; border-radius: 4px; background: #1e1e1e; box-shadow: 0 1px 3px rgba(0, 0, 0, .5); }
.floating button { flex: 1; padding-bottom: 1px; }
.grip { width: 9px; margin: 6px 2px 6px 4px; background: radial-gradient(#555 1px, transparent 1px) 0 0 / 4px 4px; }

.ohlc { font: 8px "Open Sans", sans-serif; fill: #0b1a44; }
.price { font: 7px "Open Sans", sans-serif; fill: #0a2330; }
.price.strong { font-weight: 600; }
.price.white, .time.white { fill: #fff; }
.price.white { font-weight: 600; }
.time { font: 7px "Open Sans", sans-serif; fill: #12301f; text-anchor: middle; }
.time.strong, .time.white { font-weight: 600; }
.note { font: 5px "Open Sans", sans-serif; fill: #12303a; }
.wick { stroke: #4a6068; stroke-width: 1; fill: none; }
.gray { fill: #bdbfc4; stroke: #505860; }
.blue { fill: #9cc4fa; stroke: #3c5c90; }
.orange { fill: #ee7d14; stroke: #8a4c14; }

.toolbar { display: flex; justify-content: space-between; height: 69px; padding: 9px 43px 0 44px; font-family: "Open Sans", sans-serif; }
.group { display: flex; }
.center { margin-left: 15px; }
.tool { display: grid; grid-template-columns: 1fr 24px 1fr; width: 84px; }
.left .tool { width: 88px; }
.people { width: 112px; }
.main { grid-area: 1 / 1 / 2 / 4; align-self: start; flex-direction: column; gap: 3px; font-weight: 600; white-space: nowrap; }
.main svg { width: 24px; height: 24px; fill: none; stroke: #f2f2f2; stroke-width: 1.6; }
.caret { grid-area: 1 / 3; align-self: start; justify-self: start; margin: 6px 0 0 14px; }
.caret svg { width: 12px; height: 12px; }
.count { grid-area: 1 / 3; margin-left: 3px; line-height: 24px; color: #aaa; }
.people .caret { margin-left: 31px; }
.react .caret { margin-left: 8px; }
.divider { width: 1px; height: 24px; margin: 8px 12px; background: #444; }
```
